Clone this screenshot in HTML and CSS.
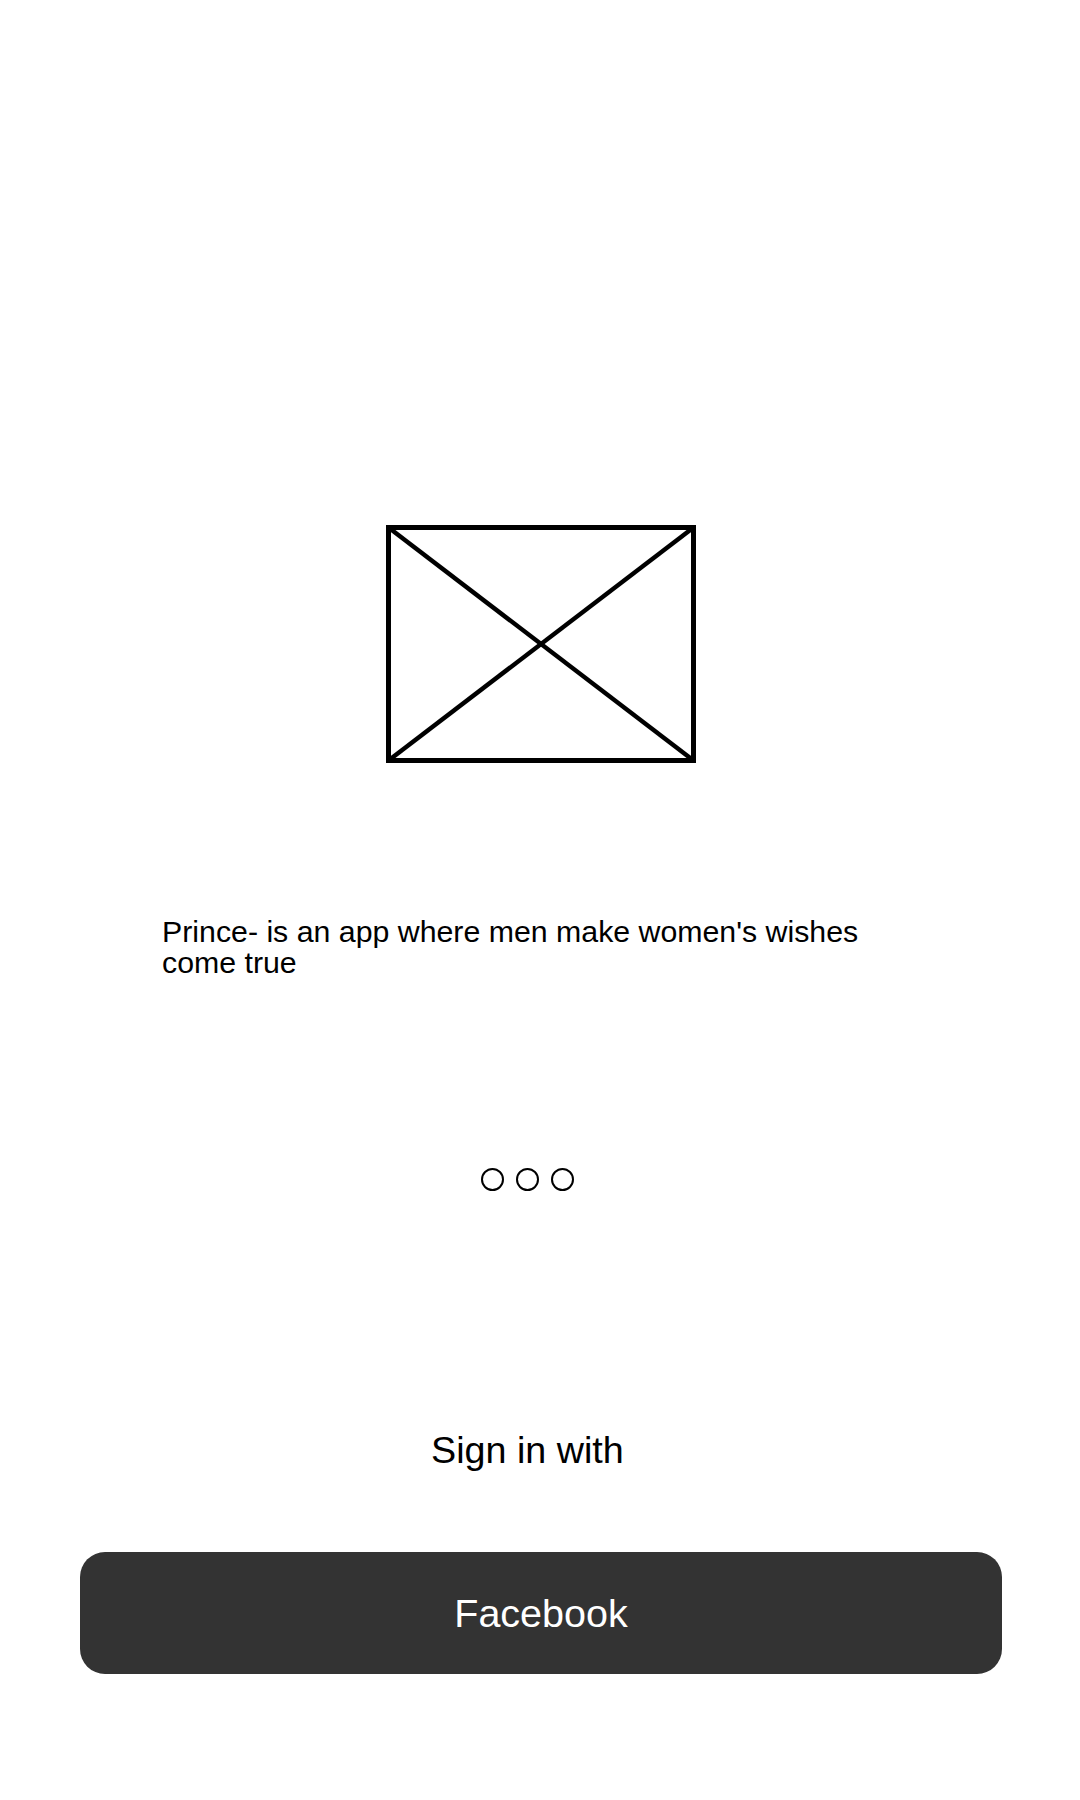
FILE: index.html
```html
<!DOCTYPE html>
<html lang="en">
<head>
<meta charset="utf-8">
<title>Prince</title>
<link rel="stylesheet" href="styles.css">
</head>
<body>
<main class="screen">
  <div class="hero">
    <svg class="placeholder" width="310" height="238" viewBox="0 0 310 238" xmlns="http://www.w3.org/2000/svg">
      <rect x="2.5" y="2.5" width="305" height="233" fill="none" stroke="#000" stroke-width="5"/>
      <line x1="2.5" y1="2.5" x2="307.5" y2="235.5" stroke="#000" stroke-width="4.5"/>
      <line x1="307.5" y1="2.5" x2="2.5" y2="235.5" stroke="#000" stroke-width="4.5"/>
    </svg>
  </div>
  <p class="intro">Prince- is an app where men make women's wishes<br>come true</p>
  <div class="dots">
    <span class="dot"></span>
    <span class="dot"></span>
    <span class="dot"></span>
  </div>
  <p class="signin">Sign in with</p>
  <button class="fb-btn">Facebook</button>
</main>
</body>
</html>
```
FILE: styles.css
```css
html, body {
  margin: 0;
  padding: 0;
  background: #ffffff;
}

body {
  font-family: "Liberation Sans", Arial, sans-serif;
  color: #000;
}

.screen {
  width: 1080px;
  height: 1800px;
  display: flex;
  flex-direction: column;
  padding-top: 525px;
  box-sizing: border-box;
}

.hero {
  display: flex;
  justify-content: center;
  padding-left: 1px;
}

.placeholder {
  display: block;
}

.intro {
  margin: 153px 0 0 162px;
  font-size: 30.3px;
  line-height: 31px;
}

.dots {
  margin-top: 190px;
  display: flex;
  gap: 12px;
  padding-left: 481px;
}

.dot {
  width: 19px;
  height: 19px;
  border: 2.5px solid #000;
  border-radius: 50%;
}

.signin {
  margin: 240px 0 0 0;
  padding-left: 431px;
  font-size: 37.7px;
  line-height: 38px;
}

.fb-btn {
  margin: 83px 0 0 80px;
  width: 922px;
  height: 122px;
  border: none;
  border-radius: 25px;
  background: #333333;
  color: #ffffff;
  font-family: "Liberation Sans", Arial, sans-serif;
  font-size: 39.5px;
  display: flex;
  align-items: center;
  justify-content: center;
  padding: 1px 0 0 0;
}
```
